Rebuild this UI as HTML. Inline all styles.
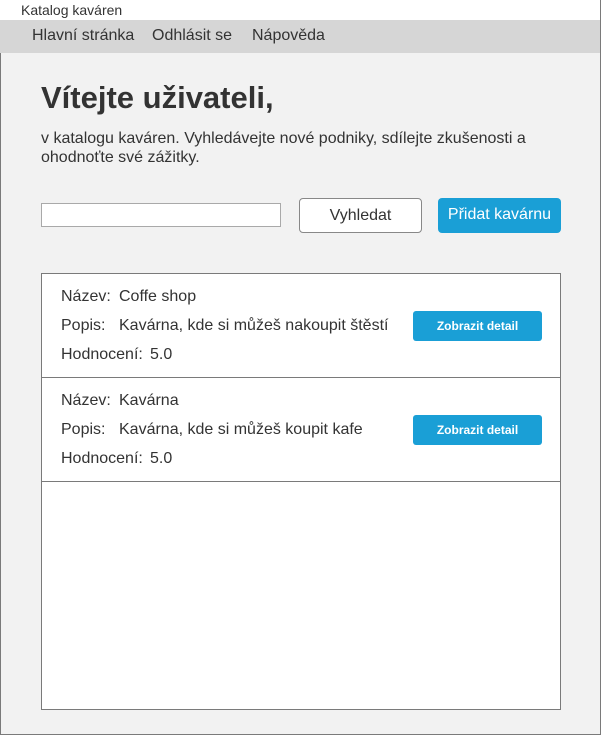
<!DOCTYPE html>
<html><head><meta charset="utf-8"><style>
*{margin:0;padding:0;box-sizing:border-box}
body{width:602px;height:736px;background:#fff;font-family:"Liberation Sans",Arial,sans-serif;color:#333;position:relative;overflow:hidden}
.frame{position:absolute;left:0;top:0;width:601px;height:735px;border:1px solid #7a7a7a;border-top:none;background:#f2f2f2}
.title{position:absolute;left:0;top:0;width:600px;height:20px;background:#fff;font-size:14px;padding:2px 0 0 21px;color:#333}
.nav{position:absolute;left:0;top:20px;width:600px;height:33px;background:#d6d6d6;font-size:16px;color:#333}
.nav span{position:absolute;top:7px}
.abs{position:absolute}
h1{position:absolute;left:41px;top:80px;font-size:31px;font-weight:bold;color:#333}
p.intro{position:absolute;left:41px;top:129px;font-size:16px;line-height:19px;width:520px}
.input{left:41px;top:203px;width:240px;height:24px;background:#fff;border:1px solid #a9a9a9}
.btn1{left:299px;top:198px;width:123px;height:35px;background:#fff;border:1px solid #888;border-radius:4px;font-size:16px;text-align:center;line-height:33px}
.btn2{left:438px;top:198px;width:123px;height:35px;background:#1a9fd6;border-radius:4px;color:#fff;font-size:16px;text-align:center;line-height:34px}
.list{left:41px;top:273px;width:520px;height:437px;background:#fff;border:1px solid #7a7a7a}
.row{position:absolute;left:0;width:518px;height:104px;border-bottom:1px solid #7a7a7a;font-size:16px}
.row span{position:absolute}
.det{position:absolute;left:371px;top:37px;width:129px;height:30px;background:#1a9fd6;border-radius:3px;color:#fff;font-size:12px;font-weight:bold;text-align:center;line-height:30px}
</style></head><body>
<div class="frame"></div>
<div class="title">Katalog kaváren</div>
<div class="nav"><span style="left:32px">Hlavní stránka</span><span style="left:152px">Odhlásit se</span><span style="left:252px">Nápověda</span></div>
<h1>Vítejte uživateli,</h1>
<p class="intro">v katalogu kaváren. Vyhledávejte nové podniky, sdílejte zkušenosti a ohodnoťte své zážitky.</p>
<div class="abs input"></div>
<div class="abs btn1">Vyhledat</div>
<div class="abs btn2">Přidat kavárnu</div>
<div class="abs list">
<div class="row" style="top:0">
<span style="left:19px;top:14px">Název:</span><span style="left:77px;top:14px">Coffe shop</span>
<span style="left:19px;top:43px">Popis:</span><span style="left:77px;top:43px">Kavárna, kde si můžeš nakoupit štěstí</span>
<span style="left:19px;top:72px">Hodnocení:</span><span style="left:108px;top:72px">5.0</span>
<div class="det">Zobrazit detail</div></div>
<div class="row" style="top:104px">
<span style="left:19px;top:14px">Název:</span><span style="left:77px;top:14px">Kavárna</span>
<span style="left:19px;top:43px">Popis:</span><span style="left:77px;top:43px">Kavárna, kde si můžeš koupit kafe</span>
<span style="left:19px;top:72px">Hodnocení:</span><span style="left:108px;top:72px">5.0</span>
<div class="det">Zobrazit detail</div></div>
</div>
</body></html>
